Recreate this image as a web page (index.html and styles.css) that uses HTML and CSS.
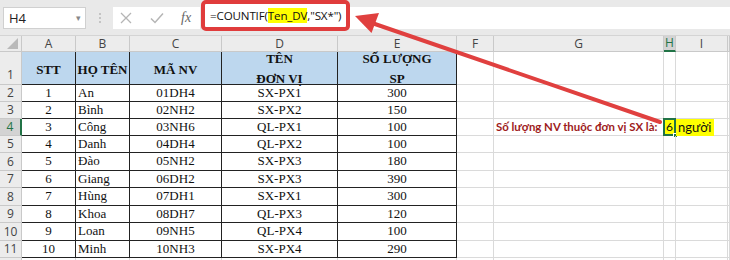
FILE: index.html
```html
<!DOCTYPE html>
<html>
<head>
<meta charset="utf-8">
<link rel="stylesheet" href="styles.css">
</head>
<body>
<div class="page">
  <div class="toolbar">
    <div class="namebox"><span>H4</span><span class="dd">▾</span></div>
    <div class="grip"><i></i><i></i><i></i></div>
    <div class="fnbox">
      <svg class="ico" width="14" height="14" viewBox="0 0 14 14"><path d="M2 2 L12 12 M12 2 L2 12" stroke="#b5b5b5" stroke-width="1.3" fill="none"/></svg>
      <svg class="ico" width="16" height="14" viewBox="0 0 16 14"><path d="M2 7.5 L6 11.5 L14 2.5" stroke="#b5b5b5" stroke-width="1.5" fill="none"/></svg>
      <span class="fx">fx</span>
    </div>
    <div class="formula"><div class="ftext">=COUNTIF(<span class="hl">Ten_DV</span>,"SX*")</div></div>
  </div>
  <div class="sheet">
    <div class="c corner"><span class="tri"></span></div>
    <div class="c ch">A</div><div class="c ch">B</div><div class="c ch">C</div><div class="c ch">D</div><div class="c ch">E</div><div class="c ch">F</div><div class="c ch">G</div><div class="c ch sel">H</div><div class="c ch">I</div><div class="c ch"></div>

    <div class="c rh bottom">1</div>
    <div class="c hd">STT</div><div class="c hd">HỌ TÊN</div><div class="c hd">MÃ NV</div><div class="c hd two">TÊN<br>ĐƠN VỊ</div><div class="c hd two">SỐ LƯỢNG<br>SP</div>
    <div class="c"></div><div class="c"></div><div class="c"></div><div class="c"></div><div class="c"></div>

    <div class="c rh">2</div><div class="c t ctr">1</div><div class="c t">An</div><div class="c t ctr">01DH4</div><div class="c t ctr">SX-PX1</div><div class="c t ctr">300</div><div class="c"></div><div class="c"></div><div class="c"></div><div class="c"></div><div class="c"></div>
    <div class="c rh">3</div><div class="c t ctr">2</div><div class="c t">Bình</div><div class="c t ctr">02NH2</div><div class="c t ctr">SX-PX2</div><div class="c t ctr">150</div><div class="c"></div><div class="c"></div><div class="c"></div><div class="c"></div><div class="c"></div>
    <div class="c rh sel">4</div><div class="c t ctr">3</div><div class="c t">Công</div><div class="c t ctr">03NH6</div><div class="c t ctr">QL-PX1</div><div class="c t ctr">100</div><div class="c"></div><div class="c note">Số lượng NV thuộc đơn vị SX là:</div><div class="c active"><span>6</span><b class="handle"></b></div><div class="c unit"><span>người</span></div><div class="c"></div>
    <div class="c rh">5</div><div class="c t ctr">4</div><div class="c t">Danh</div><div class="c t ctr">04DH4</div><div class="c t ctr">QL-PX2</div><div class="c t ctr">100</div><div class="c"></div><div class="c"></div><div class="c"></div><div class="c"></div><div class="c"></div>
    <div class="c rh">6</div><div class="c t ctr">5</div><div class="c t">Đào</div><div class="c t ctr">05NH2</div><div class="c t ctr">SX-PX3</div><div class="c t ctr">180</div><div class="c"></div><div class="c"></div><div class="c"></div><div class="c"></div><div class="c"></div>
    <div class="c rh">7</div><div class="c t ctr">6</div><div class="c t">Giang</div><div class="c t ctr">06DH2</div><div class="c t ctr">SX-PX3</div><div class="c t ctr">390</div><div class="c"></div><div class="c"></div><div class="c"></div><div class="c"></div><div class="c"></div>
    <div class="c rh">8</div><div class="c t ctr">7</div><div class="c t">Hùng</div><div class="c t ctr">07DH1</div><div class="c t ctr">SX-PX1</div><div class="c t ctr">300</div><div class="c"></div><div class="c"></div><div class="c"></div><div class="c"></div><div class="c"></div>
    <div class="c rh">9</div><div class="c t ctr">8</div><div class="c t">Khoa</div><div class="c t ctr">08DH7</div><div class="c t ctr">QL-PX3</div><div class="c t ctr">120</div><div class="c"></div><div class="c"></div><div class="c"></div><div class="c"></div><div class="c"></div>
    <div class="c rh">10</div><div class="c t ctr">9</div><div class="c t">Loan</div><div class="c t ctr">09NH5</div><div class="c t ctr">QL-PX4</div><div class="c t ctr">100</div><div class="c"></div><div class="c"></div><div class="c"></div><div class="c"></div><div class="c"></div>
    <div class="c rh">11</div><div class="c t ctr">10</div><div class="c t">Minh</div><div class="c t ctr">10NH3</div><div class="c t ctr">SX-PX4</div><div class="c t ctr">290</div><div class="c"></div><div class="c"></div><div class="c"></div><div class="c"></div><div class="c"></div>
    <div class="c rh"></div><div class="c"></div><div class="c"></div><div class="c"></div><div class="c"></div><div class="c"></div><div class="c"></div><div class="c"></div><div class="c"></div><div class="c"></div><div class="c"></div>
  </div>
  <svg class="arrow" width="730" height="260" viewBox="0 0 730 260">
    <line x1="660" y1="122" x2="372" y2="23" stroke="#e0403f" stroke-width="4" stroke-linecap="round"/>
    <polygon points="355,16 379,13 371.5,33" fill="#e0403f"/>
  </svg>
</div>
</body>
</html>
```
FILE: styles.css
```css
* { box-sizing: border-box; }
html, body { margin: 0; padding: 0; background: #fff; }
.page { position: relative; width: 730px; height: 260px; overflow: hidden; }
.toolbar {
  height: 36px; background: #e9e9e9; display: flex; align-items: center;
  padding: 0 0 0 3px; border-bottom: 1px solid #d4d4d4;
}
.namebox {
  width: 83px; height: 22px; background: #fff; border: 1px solid #d0d0d0;
  display: flex; align-items: center; justify-content: space-between;
  padding: 0 4px 0 5px; font: 13px "Open Sans", sans-serif; color: #222;
}
.namebox .dd { color: #888; font-size: 9px; }
.grip { width: 27px; display: flex; flex-direction: column; align-items: center; gap: 2px; }
.grip i { display: block; width: 2px; height: 2px; background: #c4c4c4; }
.fnbox {
  width: 87px; height: 22px; background: #fff; display: flex; align-items: center;
  padding-left: 6px; gap: 16px;
}
.fx { font: italic 14px "Liberation Serif", serif; color: #666; margin-left: 0; }
.formula {
  flex: 1; height: 22px; background: #fff; margin-left: 5px; position: relative;
}
.ftext {
  position: absolute; left: -4px; top: -7px; width: 149px; height: 31px;
  border: 4px solid #e03c3c; border-radius: 5px; background: #fff;
  font: 11.6px "Open Sans", sans-serif; color: #111; padding: 4px 0 0 5px; letter-spacing: -0.15px;
}
.hl { background: #ffff00; }
.sheet {
  display: grid;
  grid-template-columns: 22px 54px 54px 92px 116px 119px 37px 170px 12px 52px 2px;
  grid-template-rows: 16px 33px 17px 17px 17px 17px 18px 17px 18px 17px 18px 17px 20px;
}
.c { border-right: 1px solid #dadada; border-bottom: 1px solid #dadada; position: relative; min-width: 0; white-space: nowrap; }
.corner, .ch, .rh { background: #ececec; border-color: #c9c9c9; color: #444; font: 12px "Open Sans", sans-serif; }
.corner .tri { position: absolute; right: 3px; bottom: 2px; width: 0; height: 0; border-left: 11px solid transparent; border-bottom: 11px solid #b9b9b9; }
.ch { display: flex; align-items: center; justify-content: center; line-height: 1; }
.ch.sel { background: #d3d3d3; color: #217346; border-bottom: 2px solid #217346; }
.rh { display: flex; align-items: center; justify-content: center; line-height: 1; }
.rh.bottom { align-items: flex-end; padding-bottom: 3px; }
.rh.sel { background: #d3d3d3; color: #217346; border-right: 2px solid #217346; }
.hd {
  background: #bdd7ee; border-right: 1px solid #222; border-bottom: 1px solid #222;
  font: bold 13px "Liberation Serif", serif; color: #111;
  display: flex; align-items: center; justify-content: center; text-align: center; line-height: 21px; padding-top: 2px;
}
.hd.two { line-height: 20px; padding-top: 1px; }
.t {
  border-right: 1px solid #222; border-bottom: 1px solid #222;
  font: 13px "Liberation Serif", serif; color: #111; line-height: 16px; padding: 0 2px;
}
.ctr { text-align: center; }
.note { font: bold 11.4px Lato, sans-serif; color: #9e1b1b; line-height: 16px; padding-left: 2px; }
.active { background: #ffff00; border: 2px solid #217346; margin: -1px 0 0 -1px; font: 12px Lato, sans-serif; color: #111; line-height: 14px; text-align: center; overflow: visible; }
.active span { display: block; }
.handle { position: absolute; right: -4px; bottom: -4px; width: 5px; height: 5px; background: #217346; border: 1px solid #fff; }
.unit { font: 13px Lato, sans-serif; color: #111; line-height: 16px; }
.unit span { background: #ffff00; padding: 0 3px 1px 2px; }
.arrow { position: absolute; left: 0; top: 0; pointer-events: none; }
```
